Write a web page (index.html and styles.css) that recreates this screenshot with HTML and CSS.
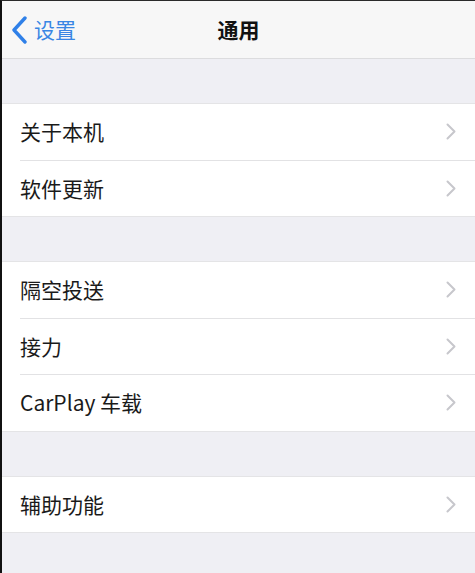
FILE: index.html
```html
<!DOCTYPE html>
<html lang="zh">
<head>
<meta charset="utf-8">
<title>通用</title>
<link rel="stylesheet" href="styles.css">
</head>
<body>
<div class="screen">
  <header class="navbar">
    <a class="back">
      <svg class="back-icon" width="18" height="28" viewBox="0 0 18 28"><path d="M14 2 L3 14 L14 26" fill="none" stroke="#2f80e8" stroke-width="3.4" stroke-linecap="round" stroke-linejoin="round"/></svg>
      <span class="back-label">设置</span>
    </a>
    <h1 class="title">通用</h1>
  </header>

  <div class="spacer"></div>
  <ul class="group">
    <li class="row"><span class="label">关于本机</span><svg class="chev" width="10" height="17" viewBox="0 0 10 17"><path d="M1.5 1.5 L8.5 8.5 L1.5 15.5" /></svg></li>
    <li class="row"><span class="label">软件更新</span><svg class="chev" width="10" height="17" viewBox="0 0 10 17"><path d="M1.5 1.5 L8.5 8.5 L1.5 15.5" /></svg></li>
  </ul>

  <div class="spacer"></div>
  <ul class="group">
    <li class="row"><span class="label">隔空投送</span><svg class="chev" width="10" height="17" viewBox="0 0 10 17"><path d="M1.5 1.5 L8.5 8.5 L1.5 15.5" /></svg></li>
    <li class="row"><span class="label">接力</span><svg class="chev" width="10" height="17" viewBox="0 0 10 17"><path d="M1.5 1.5 L8.5 8.5 L1.5 15.5" /></svg></li>
    <li class="row"><span class="label">CarPlay 车载</span><svg class="chev" width="10" height="17" viewBox="0 0 10 17"><path d="M1.5 1.5 L8.5 8.5 L1.5 15.5" /></svg></li>
  </ul>

  <div class="spacer"></div>
  <ul class="group">
    <li class="row"><span class="label">辅助功能</span><svg class="chev" width="10" height="17" viewBox="0 0 10 17"><path d="M1.5 1.5 L8.5 8.5 L1.5 15.5" /></svg></li>
  </ul>
  <div class="spacer fill"></div>
</div>
</body>
</html>
```

FILE: styles.css
```css
html, body {
  margin: 0;
  padding: 0;
  height: 100%;
  background: #efeff4;
}

body {
  font-family: "Noto Sans CJK SC", "Liberation Sans", sans-serif;
  color: #151515;
}

.screen {
  display: flex;
  flex-direction: column;
  height: 573px;
  box-sizing: border-box;
  border-left: 2px solid #111;
  border-top: 1px solid #2a2a2a;
  background: #efeff4;
  overflow: hidden;
}

.navbar {
  position: relative;
  height: 57px;
  flex: none;
  background: #f7f7f7;
  border-bottom: 1px solid #dcdcde;
  display: flex;
  align-items: center;
  justify-content: center;
}

.back {
  position: absolute;
  left: 9px;
  top: 0;
  bottom: 0;
  display: flex;
  align-items: center;
  gap: 5px;
  color: #3a86e4;
}

.back-icon {
  display: block;
}

.back-label {
  font-size: 21px;
  line-height: 1;
}

.title {
  margin: 0;
  font-size: 21px;
  font-weight: 700;
  line-height: 1;
  color: #111;
}

.spacer {
  height: 44px;
  flex: none;
}

.spacer.fill {
  flex: 1;
}

.group {
  list-style: none;
  margin: 0;
  padding: 0;
  background: #fff;
  border-top: 1px solid #e4e4e6;
  border-bottom: 1px solid #e4e4e6;
}

.row {
  position: relative;
  height: 55.5px;
  display: flex;
  align-items: center;
  justify-content: space-between;
  padding: 0 18px 0 18px;
}

.row + .row::before {
  content: "";
  position: absolute;
  left: 18px;
  right: 0;
  top: -1px;
  height: 1px;
  background: #e2e2e4;
}

.row + .row {
  margin-top: 1px;
}

.label {
  font-size: 21px;
  line-height: 1;
  color: #1a1a1a;
}

.chev {
  display: block;
  margin-right: 1px;
}

.chev path {
  fill: none;
  stroke: #c7c7cc;
  stroke-width: 2;
  stroke-linecap: round;
  stroke-linejoin: round;
}
```
